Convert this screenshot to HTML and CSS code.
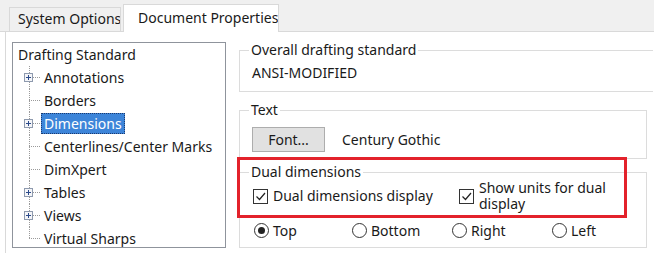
FILE: index.html
```html
<!DOCTYPE html>
<html lang="en">
<head>
    <meta charset="UTF-8">
    <meta name="viewport" content="width=device-width, initial-scale=1.0">
    <title>Document Properties</title>
    <link rel="stylesheet" href="styles.css">
</head>
<body>
    <div class="window">
        <div class="tabs">
            <div class="tab">System Options</div>
            <div class="tab active">Document Properties</div>
        </div>

        <div class="page">
            <div class="tree">
                <div class="node root"><span class="label">Drafting Standard</span></div>
                <ul class="children">
                    <li class="node"><span class="gutter"><svg class="plus" width="9" height="9" viewBox="0 0 9 9"><rect x="0.5" y="0.5" width="8" height="8" fill="#f4f5f8" stroke="#8e9aae"/><path d="M2 4.5h5M4.5 2v5" stroke="#2b4a8a"/></svg></span><span class="label">Annotations</span></li>
                    <li class="node"><span class="gutter"></span><span class="label">Borders</span></li>
                    <li class="node"><span class="gutter"><svg class="plus" width="9" height="9" viewBox="0 0 9 9"><rect x="0.5" y="0.5" width="8" height="8" fill="#f4f5f8" stroke="#8e9aae"/><path d="M2 4.5h5M4.5 2v5" stroke="#2b4a8a"/></svg></span><span class="label selected">Dimensions</span></li>
                    <li class="node"><span class="gutter"></span><span class="label">Centerlines/Center Marks</span></li>
                    <li class="node"><span class="gutter"></span><span class="label">DimXpert</span></li>
                    <li class="node"><span class="gutter"><svg class="plus" width="9" height="9" viewBox="0 0 9 9"><rect x="0.5" y="0.5" width="8" height="8" fill="#f4f5f8" stroke="#8e9aae"/><path d="M2 4.5h5M4.5 2v5" stroke="#2b4a8a"/></svg></span><span class="label">Tables</span></li>
                    <li class="node"><span class="gutter"><svg class="plus" width="9" height="9" viewBox="0 0 9 9"><rect x="0.5" y="0.5" width="8" height="8" fill="#f4f5f8" stroke="#8e9aae"/><path d="M2 4.5h5M4.5 2v5" stroke="#2b4a8a"/></svg></span><span class="label">Views</span></li>
                    <li class="node last"><span class="gutter"></span><span class="label">Virtual Sharps</span></li>
                </ul>
            </div>

            <div class="options">
                <fieldset class="group open-right">
                    <legend>Overall drafting standard</legend>
                    <div class="value">ANSI-MODIFIED</div>
                </fieldset>

                <fieldset class="group">
                    <legend>Text</legend>
                    <div class="font-row">
                        <button class="btn">Font...</button>
                        <span>Century Gothic</span>
                    </div>
                </fieldset>

                <fieldset class="group">
                    <legend>Dual dimensions</legend>
                    <div class="check-row">
                        <label class="check">
                            <span class="box"><svg width="13" height="13" viewBox="0 0 13 13"><path d="M2.5 6.5l3 3 5.5-6.5" fill="none" stroke="#222" stroke-width="1.2"/></svg></span>
                            <span>Dual dimensions display</span>
                        </label>
                        <label class="check">
                            <span class="box"><svg width="13" height="13" viewBox="0 0 13 13"><path d="M2.5 6.5l3 3 5.5-6.5" fill="none" stroke="#222" stroke-width="1.2"/></svg></span>
                            <span class="wrap">Show units for dual display</span>
                        </label>
                    </div>
                    <div class="radio-row">
                        <label class="radio"><span class="dot on"></span>Top</label>
                        <label class="radio"><span class="dot"></span>Bottom</label>
                        <label class="radio"><span class="dot"></span>Right</label>
                        <label class="radio"><span class="dot"></span>Left</label>
                    </div>
                </fieldset>
            </div>
        </div>

        <!-- red annotation frame -->
        <div class="callout"></div>
    </div>
</body>
</html>
```

FILE: styles.css
```css
body {
    margin: 0;
    background-color: #fff;
    font-family: "Noto Sans", "Open Sans", sans-serif;
    font-size: 14px;
    color: #1a1a1a;
}

.window {
    position: relative;
    width: 654px;
    height: 253px;
    overflow: hidden;
    background-color: #fff;
}

/* tabs */
.tabs {
    display: flex;
    align-items: flex-end;
    height: 31px;
    padding-left: 9px;
    background-color: #f0f0f0;
    border-bottom: 1px solid #d9d9d9;
}

.tab {
    height: 24px;
    line-height: 22px;
    padding: 0 0 0 8px;
    width: 112px;
    box-sizing: border-box;
    white-space: nowrap;
    overflow: hidden;
    border: 1px solid #d9d9d9;
    border-bottom: none;
    background-color: #f0f0f0;
}

.tab.active {
    height: 28px;
    line-height: 26px;
    width: 156px;
    margin-left: 2px;
    margin-bottom: -1px;
    padding: 0 0 0 14px;
    background-color: #fff;
}

/* page */
.page {
    display: flex;
    gap: 13px;
    margin-left: 5px;
    padding: 10px 0 0 6px;
    border-left: 1px solid #d9d9d9;
    height: 221px;
}

.tree {
    width: 212px;
    height: 204px;
    border: 1px solid #8f949c;
    flex-shrink: 0;
    overflow: hidden;
    white-space: nowrap;
}

.node {
    display: flex;
    align-items: center;
    height: 23px;
}

.root {
    padding-left: 2px;
}

.children {
    list-style: none;
    margin: 0;
    padding: 0 0 0 11px;
}

.children .node {
    align-items: stretch;
}

.gutter {
    display: flex;
    align-items: center;
    width: 17px;
    flex-shrink: 0;
    background-image:
        repeating-linear-gradient(to bottom, #9a9a9a 0 1px, transparent 1px 2px),
        repeating-linear-gradient(to right, #9a9a9a 0 1px, transparent 1px 2px);
    background-size: 1px 100%, 11px 1px;
    background-position: 5px 0, 5px 11px;
    background-repeat: no-repeat;
}

.last .gutter {
    background-size: 1px 12px, 11px 1px;
}

.plus {
    display: block;
}

.label {
    align-self: center;
    padding: 0 2px;
    line-height: 19px;
    border: 1px dotted transparent;
}

.label.selected {
    background-color: #3d85d9;
    border-color: #1c3a6e;
    color: #fff;
}

/* option groups */
.options {
    width: 414px;
    overflow: hidden;
}

.group {
    margin: 0 6px 0 0;
    border: 1px solid #dcdcdc;
    padding: 0 9px;
    min-width: 0;
}

.group legend {
    padding: 0 2px;
    line-height: 16px;
}

.group.open-right {
    margin-right: 0;
    border-right: none;
    padding-top: 6px;
    padding-bottom: 9px;
}

.value {
    padding-left: 3px;
    line-height: 18px;
}

.group:nth-child(2) {
    margin-top: 10px;
    padding-top: 9px;
    padding-bottom: 6px;
}

.font-row {
    display: flex;
    align-items: center;
    gap: 17px;
    padding-left: 3px;
}

.btn {
    width: 73px;
    height: 25px;
    font: inherit;
    color: inherit;
    background-color: #e1e1e1;
    border: 1px solid #adadad;
    border-radius: 0;
    padding: 0;
}

.group:nth-child(3) {
    margin-top: 5px;
    padding-bottom: 8px;
}

.check-row {
    display: flex;
    align-items: center;
    height: 32px;
    padding-left: 4px;
}

.check {
    display: flex;
    align-items: center;
    gap: 5px;
    line-height: 16px;
}

.check:first-child {
    width: 206px;
}

.box {
    width: 13px;
    height: 13px;
    border: 1px solid #333;
    flex-shrink: 0;
}

.box svg {
    display: block;
}

.wrap {
    width: 140px;
}

.radio-row {
    display: grid;
    grid-template-columns: 98px 100px 100px auto;
    margin-top: 9px;
    padding-left: 5px;
    height: 18px;
}

.radio {
    display: flex;
    align-items: center;
    gap: 4px;
}

.dot {
    width: 13px;
    height: 13px;
    border: 1px solid #333;
    border-radius: 50%;
}

.dot.on::after {
    content: "";
    display: block;
    width: 7px;
    height: 7px;
    margin: 3px;
    border-radius: 50%;
    background-color: #222;
}

.callout {
    position: absolute;
    left: 237px;
    top: 157px;
    width: 384px;
    height: 55px;
    border: 3px solid #e3222b;
}
```
